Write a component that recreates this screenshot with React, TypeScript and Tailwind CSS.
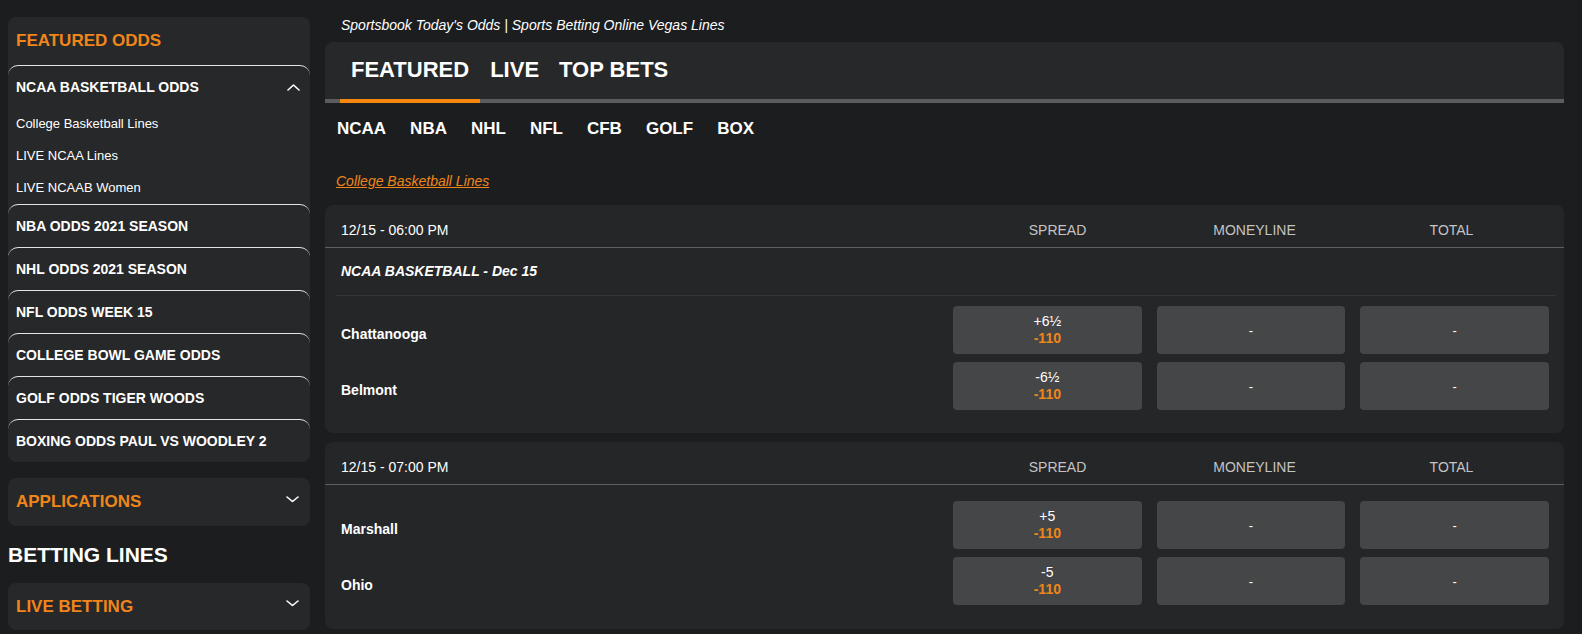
import React from "react";

const FONT = { fontFamily: '"Liberation Sans", Arial, sans-serif' };

const featuredLinks = ["College Basketball Lines", "LIVE NCAA Lines", "LIVE NCAAB Women"];

const otherOdds = [
  "NBA ODDS 2021 SEASON",
  "NHL ODDS 2021 SEASON",
  "NFL ODDS WEEK 15",
  "COLLEGE BOWL GAME ODDS",
  "GOLF ODDS TIGER WOODS",
  "BOXING ODDS PAUL VS WOODLEY 2",
];

const sports = ["NCAA", "NBA", "NHL", "NFL", "CFB", "GOLF", "BOX"];

const games = [
  {
    time: "12/15 - 06:00 PM",
    league: "NCAA BASKETBALL - Dec 15",
    teams: [
      { name: "Chattanooga", spread: "+6½", price: "-110" },
      { name: "Belmont", spread: "-6½", price: "-110" },
    ],
  },
  {
    time: "12/15 - 07:00 PM",
    league: null,
    teams: [
      { name: "Marshall", spread: "+5", price: "-110" },
      { name: "Ohio", spread: "-5", price: "-110" },
    ],
  },
];

function Chevron({ up }: { up?: boolean }) {
  return (
    <svg width="13" height="7" viewBox="0 0 13 7" className="shrink-0">
      <polyline
        points={up ? "1,6 6.5,1 12,6" : "1,1 6.5,5.5 12,1"}
        fill="none"
        stroke="#ffffff"
        strokeWidth="1.6"
        strokeLinecap="round"
        strokeLinejoin="round"
      />
    </svg>
  );
}

function Sidebar() {
  return (
    <aside className="w-[302px] ml-[8px] pt-[17px] flex flex-col shrink-0">
      <div className="bg-[#27282a] rounded-[8px] overflow-hidden">
        <div className="h-[48px] flex items-center px-2 text-[17px] font-bold text-[#f0861a]">
          FEATURED ODDS
        </div>
        <div className="border-t border-[#e4e4e4] rounded-t-[10px]">
          <div className="h-[42px] flex items-center justify-between px-2 pr-[10px]">
            <span className="text-[14px] font-bold text-white">NCAA BASKETBALL ODDS</span>
            <Chevron up />
          </div>
          {featuredLinks.map((l) => (
            <div key={l} className="h-[32px] flex items-center px-2 text-[13px] text-white">
              {l}
            </div>
          ))}
        </div>
        {otherOdds.map((o) => (
          <div
            key={o}
            className="h-[43px] border-t border-[#e4e4e4] rounded-t-[10px] flex items-center px-2 text-[14px] font-bold text-white"
          >
            {o}
          </div>
        ))}
      </div>

      <div className="mt-[16px] h-[48px] bg-[#27282a] rounded-[8px] flex items-center justify-between px-2 pr-[11px]">
        <span className="text-[17px] font-bold text-[#f0861a]">APPLICATIONS</span>
        <span className="-mt-[6px]">
          <Chevron />
        </span>
      </div>

      <div className="h-[57px] flex items-center text-[21px] font-bold text-white">BETTING LINES</div>

      <div className="h-[47px] bg-[#27282a] rounded-[8px] flex items-center justify-between px-2 pr-[11px]">
        <span className="text-[17px] font-bold text-[#f0861a]">LIVE BETTING</span>
        <span className="-mt-[6px]">
          <Chevron />
        </span>
      </div>
    </aside>
  );
}

function OddsBox({ top, bottom }: { top?: string; bottom?: string }) {
  return (
    <div className="h-[48px] bg-[#454647] rounded-[4px] flex flex-col items-center justify-center text-[14px] leading-[17px] text-white">
      {top ? (
        <>
          <span>{top}</span>
          <span className="font-bold text-[14px] text-[#f0861a]">{bottom}</span>
        </>
      ) : (
        <span className="text-[13px]">-</span>
      )}
    </div>
  );
}

function TeamRow({ team }: { team: { name: string; spread: string; price: string } }) {
  return (
    <div className="flex items-center">
      <div className="flex-1 pl-[16px] pt-[8px] text-[14px] font-bold text-white">{team.name}</div>
      <div className="w-[596px] mr-[15px] grid grid-cols-3 gap-[15px]">
        <OddsBox top={team.spread} bottom={team.price} />
        <OddsBox />
        <OddsBox />
      </div>
    </div>
  );
}

function GameCard({ game }: { game: (typeof games)[number] }) {
  return (
    <div className="bg-[#252628] rounded-[8px]">
      <div className="h-[43px] pt-[8px] flex items-center border-b border-[#5e5f61]">
        <div className="flex-1 pl-[16px] text-[14px] text-white">{game.time}</div>
        <div className="w-[591px] mr-[14px] grid grid-cols-3 text-center text-[14px] text-[#c4c4c4]">
          <span>SPREAD</span>
          <span>MONEYLINE</span>
          <span>TOTAL</span>
        </div>
      </div>
      {game.league ? (
        <>
          <div className="h-[47px] flex items-center pl-[16px] text-[14px] font-bold italic text-white">
            {game.league}
          </div>
          <div className="ml-[11px] mr-[8px] h-px bg-[#343537]" />
          <div className="pt-[10px] pb-[23px] flex flex-col gap-[8px]">
            {game.teams.map((t) => (
              <TeamRow key={t.name} team={t} />
            ))}
          </div>
        </>
      ) : (
        <div className="pt-[16px] pb-[24px] flex flex-col gap-[8px]">
          {game.teams.map((t) => (
            <TeamRow key={t.name} team={t} />
          ))}
        </div>
      )}
    </div>
  );
}

export default function App() {
  return (
    <div className="w-[1582px] h-[634px] overflow-hidden bg-[#1c1d1f] flex" style={FONT}>
      <Sidebar />
      <main className="ml-[15px] w-[1239px] flex flex-col">
        <div className="h-[42px] pt-[8px] flex items-center pl-[16px] text-[14px] italic text-white">
          Sportsbook Today's Odds | Sports Betting Online Vegas Lines
        </div>

        <div className="bg-[#27282a] rounded-t-[8px] flex px-[15px] border-b-4 border-[#5b5c5e]">
          {["FEATURED", "LIVE", "TOP BETS"].map((t, i) =>
            i === 0 ? (
              <div
                key={t}
                className="h-[61px] mb-[-4px] border-b-4 border-[#f7860f] px-[11px] pb-[3px] flex items-center text-[22px] font-bold text-white"
              >
                {t}
              </div>
            ) : (
              <div key={t} className="h-[57px] px-[10px] pb-[3px] flex items-center text-[22px] font-bold text-white">
                {t}
              </div>
            )
          )}
        </div>

        <nav className="h-[52px] flex items-center">
          {sports.map((s) => (
            <span key={s} className="px-[12px] text-[17px] font-bold text-white">
              {s}
            </span>
          ))}
        </nav>

        <div className="h-[50px] pt-[2px] flex items-center pl-[11px]">
          <a className="text-[14px] italic underline text-[#f0861a]">College Basketball Lines</a>
        </div>

        <div className="flex flex-col gap-[9px]">
          {games.map((g) => (
            <GameCard key={g.time} game={g} />
          ))}
        </div>
      </main>
    </div>
  );
}
